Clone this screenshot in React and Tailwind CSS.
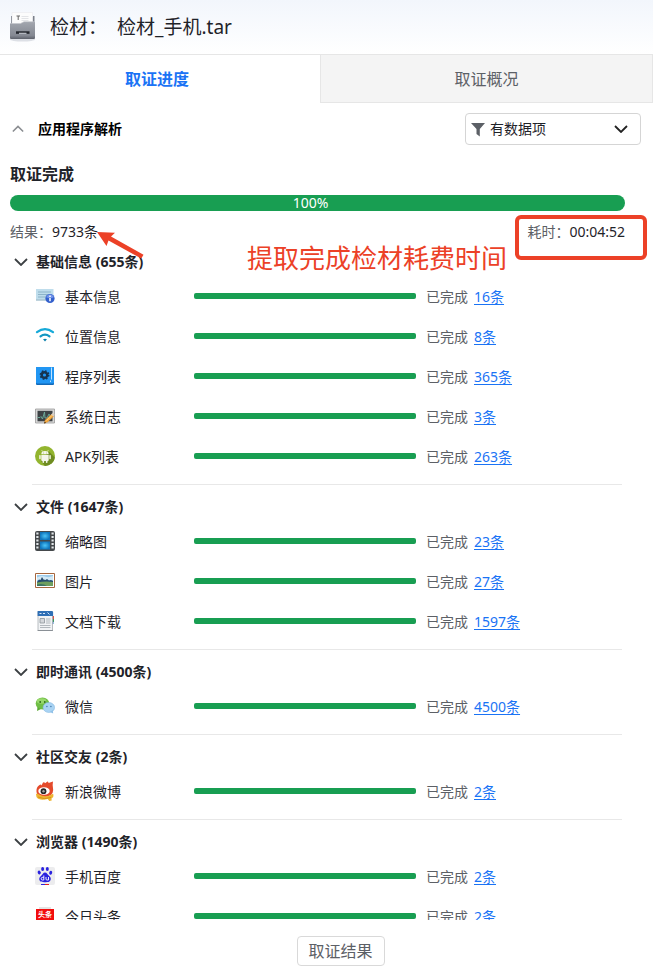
import { useState } from 'react'

function ArchiveIcon() {
  return (
    <svg className="w-7 h-8" viewBox="0 0 28 32" aria-hidden="true">
      <defs>
        <linearGradient id="archive-front" x1="0" y1="0" x2="0" y2="1">
          <stop offset="0" stopColor="#a3a7af" />
          <stop offset="0.8" stopColor="#848892" />
          <stop offset="1" stopColor="#5d616b" />
        </linearGradient>
      </defs>
      <ellipse cx="14.500" cy="28.500" rx="12.500" ry="2" fill="#dde0e6" />
      <path d="M3 5h1.500v9H3zM25 5h1.500v9H25z" fill="#7b808a" />
      <path d="M4.500 6h20.500v8H4.500z" fill="#c3c8d0" />
      <path d="M4 1.500h20.500V15H4z" fill="#fcfcfc" stroke="#e6e7ea" strokeWidth="0.500" />
      <path d="M8.500 5h3.500M10.200 5v4" stroke="#666" strokeWidth="1" />
      <path d="M13.500 5.500h7M13.500 7.500h7M13.500 9.500h7" stroke="#d9dade" strokeWidth="0.700" />
      <path d="M2 12.500h10.500l3.500-1.800h11V27a1 1 0 0 1-1 1H3a1 1 0 0 1-1-1z" fill="url(#archive-front)" />
      <path d="M2 12.500h10.500l3.500-1.800h11" fill="none" stroke="#c2c5cb" strokeWidth="0.600" />
      <path d="M8 20.300h13.500v2.500H8z" fill="#23262d" />
      <path d="M11 21.700h7.500v1.300H11z" fill="#b4b8c0" />
    </svg>
  )
}

function InfoIcon() {
  return (
    <svg className="w-5 h-5" viewBox="0 0 20 20" aria-hidden="true">
      <path d="M1 3h17.500v10.500H1z" fill="#bfddec" />
      <path d="M1 13.500h17.500v1H1z" fill="#7fa6ba" />
      <path d="M3 6h13M3 8.500h10M3 11h8" stroke="#82a9bf" strokeWidth="0.800" />
      <circle cx="15" cy="12.500" r="4.600" fill="#3460cc" />
      <path d="M11.200 11.200a4 4 0 0 1 7.600 0q-3.800 1.800-7.600 0z" fill="#7193ea" />
      <path d="M15 9.500v1.400M15 12v3.200" stroke="#fff" strokeWidth="1.500" />
    </svg>
  )
}

function WifiIcon() {
  return (
    <svg className="w-5 h-5" viewBox="0 0 20 20" aria-hidden="true">
      <g fill="none" strokeLinecap="round">
        <path d="M2 6.200q8-6 16 0" stroke="#16a9d8" strokeWidth="2.200" />
        <path d="M5.500 10.300q4.500-3.400 9 0" stroke="#1196c2" strokeWidth="2.200" />
      </g>
      <path d="M8 13.300q2-1.300 4 0L10 15.600z" fill="#0d83ad" />
    </svg>
  )
}

function ProgramIcon() {
  return (
    <svg className="w-5 h-5" viewBox="0 0 20 20" aria-hidden="true">
      <rect x="1" y="1" width="18" height="18" rx="1" fill="#1269b8" />
      <rect x="1" y="1" width="18" height="16.500" rx="1" fill="#2196f3" />
      <path d="M16.500 1.500v12M15.500 14.500v1.600" stroke="#bfe2ff" strokeWidth="1" />
      <circle cx="9.500" cy="9" r="2.800" fill="none" stroke="#16344f" strokeWidth="2.400" />
      <circle cx="9.500" cy="9" r="4.200" fill="none" stroke="#16344f" strokeWidth="1.400" strokeDasharray="1.650 1.649" />
    </svg>
  )
}

function LogIcon() {
  return (
    <svg className="w-5 h-5" viewBox="0 0 20 20" aria-hidden="true">
      <path d="M0.500 3h19v14h-19z" fill="#d7d7d7" stroke="#9a9a9a" strokeWidth="0.8" />
      <path d="M2.500 4.800h15v10.500h-15z" fill="#3d4245" />
      <path d="M2.500 11.500h2.500l1-1 1.500 2.500L9.500 6l.5 6h2l2-4 1 2h2.500" fill="none" stroke="#6fb09d" strokeWidth="0.9" />
      <path d="M9 17.500l1-3.500 6.500-6 2.500 2.300-6.500 6z" fill="#eda23a" />
      <path d="M16 8.400l1.700-1.500 2 1.900-1.500 1.600z" fill="#dccfbd" />
      <path d="M11.500 14.500l5.500-5" stroke="#ffd68a" strokeWidth="0.9" />
      <path d="M9 17.500l.6-1.900 1.500 1.300z" fill="#4a3216" />
    </svg>
  )
}

function ApkIcon() {
  return (
    <svg className="w-5 h-5" viewBox="0 0 20 20" aria-hidden="true">
      <circle cx="10" cy="10" r="10" fill="#93b52f" />
      <path d="M14 5.500l5.900 5.900A10 10 0 0 1 10 20l-4-5z" fill="#6f8c22" />
      <g fill="#f4f6ea">
        <path d="M6.300 8.300a3.700 3.300 0 0 1 7.400 0z" />
        <path d="M6.300 9h7.400v5a.9.900 0 0 1-.9.900H7.200a.9.900 0 0 1-.9-.9z" />
        <rect x="4.200" y="9" width="1.500" height="4.300" rx="0.700" />
        <rect x="14.300" y="9" width="1.500" height="4.300" rx="0.700" />
        <rect x="7.500" y="13" width="1.600" height="4" rx="0.800" />
        <rect x="10.900" y="13" width="1.600" height="4" rx="0.800" />
      </g>
      <path d="M7.500 5.700L6.700 4M12.500 5.700l.8-1.700" stroke="#f4f6ea" strokeWidth="0.600" />
      <circle cx="8.400" cy="7" r="0.400" fill="#7d9b28" />
      <circle cx="11.600" cy="7" r="0.400" fill="#7d9b28" />
    </svg>
  )
}

function FilmIcon() {
  return (
    <svg className="w-5 h-5" viewBox="0 0 20 20" aria-hidden="true">
      <defs>
        <radialGradient id="film-frame">
          <stop offset="0" stopColor="#4cc4f7" />
          <stop offset="1" stopColor="#0f76bd" />
        </radialGradient>
      </defs>
      <rect x="0" y="0" width="20" height="20" rx="2" fill="#45494c" />
      <path d="M2.400 1.500v17M17.600 1.500v17" stroke="#e2e6e8" strokeWidth="2.200" strokeDasharray="2 1.500" />
      <rect x="5" y="1" width="10" height="8" fill="url(#film-frame)" />
      <rect x="5" y="10.500" width="10" height="8" fill="url(#film-frame)" />
    </svg>
  )
}

function PictureIcon() {
  return (
    <svg className="w-5 h-5" viewBox="0 0 20 20" aria-hidden="true">
      <path d="M0.500 2.500h19v14h-19z" fill="#fff" stroke="#a5673f" strokeWidth="1" />
      <path d="M2 4h16v11H2z" fill="#9ccbea" />
      <path d="M2 6.500q4-2.500 8-1t8-.5v4H2z" fill="#d3e9f5" />
      <path d="M2 11l2-2.500 1.500.5 1.500-3 1.500 2.500 2 .5 1.500-1 2 1.500 2-.5 2 1V12H2z" fill="#274d70" />
      <path d="M2 11.500q8-1.500 16-.5v4H2z" fill="#6f9f5f" />
      <path d="M2 13.500q6-1.500 10 1.500H2z" fill="#3e7464" />
    </svg>
  )
}

function DocumentIcon() {
  return (
    <svg className="w-5 h-5" viewBox="0 0 20 20" aria-hidden="true">
      <path d="M17 5h2v4h-2z" fill="#d9534a" />
      <path d="M17 8h2v3h-2z" fill="#3f9b55" />
      <path d="M17 10.500h1.500V13H17z" fill="#3676c4" />
      <path d="M3 .5h14.500v19H3z" fill="#f1f3f5" stroke="#a8adb3" strokeWidth="0.800" />
      <path d="M2.600 0h14.500l1 1v4H2.600z" fill="#2f6fb5" />
      <path d="M4.500 2.500h2M8 2.500h2M12.500 1.500l2 2" stroke="#d6e6f7" strokeWidth="1" />
      <path d="M5 7.500h4.500V12H5z" fill="#d4d7db" stroke="#8d949b" strokeWidth="0.800" />
      <path d="M11 8h4.500M11 10h4.500M11 12h4.500M5 14.500h10.500M5 16.500h10.500" stroke="#a2a8ae" strokeWidth="0.800" />
      <path d="M2.600 19.500h15.300" stroke="#858b91" strokeWidth="0.900" />
    </svg>
  )
}

function WechatIcon() {
  return (
    <svg className="w-5 h-5" viewBox="0 0 20 20" aria-hidden="true">
      <ellipse cx="7.500" cy="7.500" rx="6.800" ry="6" fill="#6fbe45" />
      <path d="M2.500 11l-.5 4 4-2z" fill="#5cab35" />
      <ellipse cx="6.500" cy="5" rx="4.800" ry="2.800" fill="#97d86c" />
      <circle cx="5.200" cy="6" r="0.900" fill="#2f6a18" />
      <circle cx="9.800" cy="6" r="0.900" fill="#2f6a18" />
      <ellipse cx="13.800" cy="11.500" rx="5.800" ry="5" fill="#a9d3f3" stroke="#79b0dc" strokeWidth="0.500" />
      <path d="M15 16l3.200 1.500-.5-3.500z" fill="#8fc1e8" />
      <circle cx="11.900" cy="10.500" r="0.700" fill="#3d76a8" />
      <circle cx="15.900" cy="10.500" r="0.700" fill="#3d76a8" />
    </svg>
  )
}

function WeiboIcon() {
  return (
    <svg className="w-5 h-5" viewBox="0 0 20 20" aria-hidden="true">
      <path d="M1.500 11q-.5-5 3-7 1.500-1 2 .5L8 1.500q1.500-1 2 .7l2.500-1.700q1-.3 1 1.500L18 .5q-.8 3 .2 8.500Q18 15 10 16 2 16 1.500 11z" fill="#e44a2b" />
      <path d="M1 13q1-1 3 .5 6 3.200 11.500.5 2-1.500 3-.5.5 2.500-2 4l.2 2-2.400.5-1.500-2Q4 20 1.500 16z" fill="#eeb42f" />
      <path d="M3 16q6 3 13 .5" fill="none" stroke="#c98613" strokeWidth="0.700" />
      <ellipse cx="9" cy="10" rx="5.700" ry="3.800" fill="#fff" />
      <circle cx="8.500" cy="10.200" r="2.900" fill="#262626" />
      <circle cx="8.500" cy="10.200" r="1.200" fill="#a2a2a2" />
    </svg>
  )
}

function BaiduIcon() {
  return (
    <svg className="w-5 h-5" viewBox="0 0 20 20" aria-hidden="true">
      <rect x="0" y="1" width="20" height="18" rx="2" fill="#ececee" />
      <g fill="#2a22df">
        <ellipse cx="4.200" cy="6.500" rx="1.500" ry="2" transform="rotate(-12 4.200 6.500)" />
        <ellipse cx="7.600" cy="3" rx="1.500" ry="2.100" />
        <ellipse cx="12.300" cy="3" rx="1.500" ry="2.100" />
        <ellipse cx="15.700" cy="6.800" rx="1.500" ry="2" transform="rotate(12 15.700 6.800)" />
        <path d="M10 6.500c2 0 2.500 2 4 3.300s2.300 2.500 1.500 4.500-3 1.900-5.500 1.900-4.700.1-5.500-1.900.2-3.200 1.700-4.500S8 6.500 10 6.500z" />
      </g>
      <path d="M8.800 9.500V14H7.200q-1-.1-1-1.300t1-1.300h1.600M11 11v2.100q0 .9 1 .9h1.500v-3" fill="none" stroke="#fff" strokeWidth="0.900" />
      <path d="M6 18.500h4" stroke="#2a22df" strokeWidth="1" />
      <path d="M10 18.500h4" stroke="#e02222" strokeWidth="1" />
    </svg>
  )
}

function ToutiaoIcon() {
  return (
    <svg className="w-5 h-5" viewBox="0 0 20 20" aria-hidden="true">
      <path d="M4 1h12v3H4z" fill="#e4e4e4" />
      <path d="M1 3h18v13H1z" fill="#f20d0d" />
      <text x="10" y="11" textAnchor="middle" fontSize="7" fontWeight="700" fill="#fff">头条</text>
    </svg>
  )
}

const groups = [
  {
    name: '基础信息',
    total: 655,
    items: [
      { name: '基本信息', count: 16, icon: InfoIcon },
      { name: '位置信息', count: 8, icon: WifiIcon },
      { name: '程序列表', count: 365, icon: ProgramIcon },
      { name: '系统日志', count: 3, icon: LogIcon },
      { name: 'APK列表', count: 263, icon: ApkIcon },
    ],
  },
  {
    name: '文件',
    total: 1647,
    items: [
      { name: '缩略图', count: 23, icon: FilmIcon },
      { name: '图片', count: 27, icon: PictureIcon },
      { name: '文档下载', count: 1597, icon: DocumentIcon },
    ],
  },
  {
    name: '即时通讯',
    total: 4500,
    items: [{ name: '微信', count: 4500, icon: WechatIcon }],
  },
  {
    name: '社区交友',
    total: 2,
    items: [{ name: '新浪微博', count: 2, icon: WeiboIcon }],
  },
  {
    name: '浏览器',
    total: 1490,
    items: [
      { name: '手机百度', count: 2, icon: BaiduIcon },
      { name: '今日头条', count: 2, icon: ToutiaoIcon },
    ],
  },
]

function Chevron({ className }) {
  return (
    <svg className={className} viewBox="0 0 14 8" fill="none" stroke="currentColor" strokeWidth="1.800" aria-hidden="true">
      <path d="M1 1l6 6 6-6" />
    </svg>
  )
}

function ItemRow({ item }) {
  const Icon = item.icon

  return (
    <li className="flex items-center h-10 pl-[35px]">
      <div className="pb-0.5">
        <Icon />
      </div>
      <span className="w-[139px] pl-2.5 text-[#1f2329]">{item.name}</span>
      <div className="flex-1 pb-0.5">
        <div className="h-1.5 rounded-xs bg-[#189e52]" />
      </div>
      <div className="w-[206px] pl-2.5 text-[#5c6066]">
        已完成
        <a href="#" className="ml-1.5 text-[#1a73f5] underline underline-offset-2">{item.count}条</a>
      </div>
    </li>
  )
}

function Group({ group }) {
  const [open, setOpen] = useState(true)

  return (
    <section className="mr-[31px]">
      <button
        onClick={() => setOpen(!open)}
        aria-expanded={open}
        className="flex items-center h-[30px] pl-3.5 gap-2 font-bold text-[#1f2329]"
      >
        <Chevron className={open ? 'w-3.5 h-2 text-[#3c4043]' : 'w-3.5 h-2 text-[#3c4043] -rotate-90'} />
        {group.name} ({group.total}条)
      </button>
      {open && (
        <ul>
          {group.items.map((item) => (
            <ItemRow key={item.name} item={item} />
          ))}
        </ul>
      )}
      <div className="my-[7px] ml-8 border-t border-[#e8e8e8]" />
    </section>
  )
}

export default function App() {
  const [filter, setFilter] = useState('data')

  return (
    <div className="flex flex-col h-screen bg-white text-sm leading-5 font-['Noto_Sans','Noto_Sans_CJK_SC',sans-serif]">
      <header className="flex shrink-0 items-center h-[55px] px-2 border-b border-[#e6e6e6] bg-linear-to-b from-[#f2f6fc] to-white">
        <ArchiveIcon />
        <h1 className="flex gap-2.5 pl-3.5 text-[19px] leading-7 text-[#1f2329]">
          <span>检材：</span>
          <span>检材_手机.tar</span>
        </h1>
      </header>

      <nav className="flex shrink-0 h-12 text-base">
        <button className="w-[49%] pr-1.5 font-bold text-[#1a73f5]">取证进度</button>
        <button className="flex-1 border-x border-b border-[#e6e6e6] bg-[#f4f4f4] text-[#5c6066]">取证概况</button>
      </nav>

      <div className="flex shrink-0 items-center justify-between h-[52px] px-3">
        <button className="flex items-center gap-3.5 font-bold text-black">
          <Chevron className="w-3 h-2 rotate-180 text-[#8a8d91]" />
          应用程序解析
        </button>
        <div className="relative">
          <svg className="absolute left-1.5 top-2.5 w-3.5 h-3.5 pointer-events-none" viewBox="0 0 14 14" aria-hidden="true">
            <path d="M0 0h14L8.800 6v7.500L5.500 11V6z" fill="#5c6066" />
          </svg>
          <select
            aria-label="数据筛选"
            value={filter}
            onChange={(e) => setFilter(e.target.value)}
            className="block w-44 h-8 pl-6 appearance-none rounded-sm border border-[#d5d5d5] bg-transparent text-[#1f2329]"
          >
            <option value="data">有数据项</option>
            <option value="all">全部</option>
          </select>
          <Chevron className="absolute right-3 top-3 w-4 h-2 pointer-events-none text-[#222]" />
        </div>
      </div>

      <div className="relative shrink-0">
        <div className="pl-2.5 pr-7">
          <h2 className="h-10 leading-[38px] text-base font-bold text-[#1f2329]">取证完成</h2>
          <div className="h-4 rounded-full bg-[#189e52] text-center leading-4 text-white pr-3.5">100%</div>
          <div className="flex items-center justify-between h-9 pt-1.5 text-[#1f2329]">
            <p><span className="text-[#5c6066]">结果：</span>9733条</p>
            <p><span className="text-[#5c6066]">耗时：</span>00:04:52</p>
          </div>
        </div>

        <svg className="absolute left-24 top-[76px] w-12 h-7 z-10" viewBox="0 0 48 28" aria-hidden="true">
          <path d="M1 1l18 .8-4 3.800 32.500 18.200-2.200 3.800L12.500 9.500 10.500 15z" fill="#ec4127" />
        </svg>
        <p className="absolute right-[146px] top-[85px] text-[26px] leading-9 text-[#ec4127]">提取完成检材耗费时间</p>
        <div className="absolute right-1.5 top-[60px] w-[132px] h-[45px] rounded-md border-4 border-[#ec4127]" />
      </div>

      <main className="flex-1 min-h-0 overflow-y-auto [scrollbar-width:none]">
        {groups.map((group) => (
          <Group key={group.name} group={group} />
        ))}
      </main>

      <footer className="flex shrink-0 items-start justify-center h-[54px] pt-4 pl-7">
        <button className="w-[88px] h-[30px] rounded-sm border border-[#d9d9d9] text-base text-[#5c6066]">取证结果</button>
      </footer>
    </div>
  )
}
